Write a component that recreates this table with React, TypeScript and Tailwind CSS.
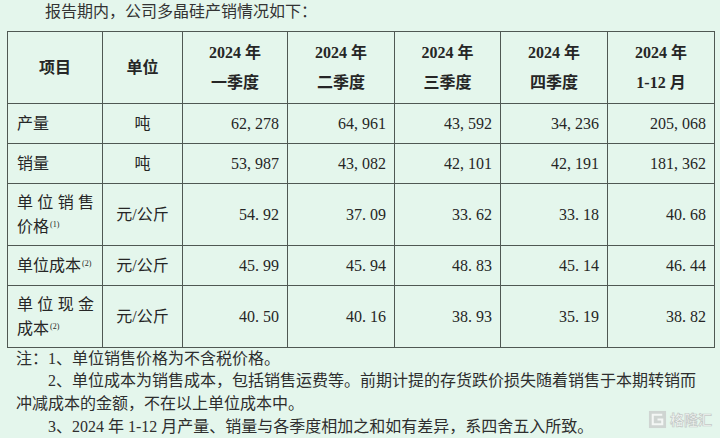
import React from "react"

const cjk = { fontFamily: '"Liberation Serif", "Noto Sans CJK SC", serif' }

type Row = {
   name: React.ReactNode
   unit: string
   values: string[]
   tall?: boolean
}

// SimSun style numbers: a little gap after "," and "."
function Num({ v }: { v: string }) {
   const parts = v.split(/([,.])/)
   return (
      <span>
         {parts.map((p, i) =>
            p === "," || p === "." ? (
               <span key={i} className="mr-[4px]">{p}</span>
            ) : (
               <span key={i}>{p}</span>
            )
         )}
      </span>
   )
}

function Spread({ text }: { text: string }) {
   return (
      <div className="flex justify-between h-[24px]">
         {text.split("").map((c, i) => (
            <span key={i}>{c}</span>
         ))}
      </div>
   )
}

function Sup({ n }: { n: number }) {
   return <sup className="text-[8px] relative -top-[5px] ml-[1px]">({n})</sup>
}

const rows: Row[] = [
   { name: "产量", unit: "吨", values: ["62,278", "64,961", "43,592", "34,236", "205,068"] },
   { name: "销量", unit: "吨", values: ["53,987", "43,082", "42,101", "42,191", "181,362"] },
   {
      name: (
         <div className="leading-[24px]">
            <Spread text="单位销售" />
            <div className="h-[24px]">价格<Sup n={1} /></div>
         </div>
      ),
      unit: "元/公斤",
      values: ["54.92", "37.09", "33.62", "33.18", "40.68"],
      tall: true,
   },
   {
      name: (
         <span>单位成本<Sup n={2} /></span>
      ),
      unit: "元/公斤",
      values: ["45.99", "45.94", "48.83", "45.14", "46.44"],
   },
   {
      name: (
         <div className="leading-[24px]">
            <Spread text="单位现金" />
            <div className="h-[24px]">成本<Sup n={2} /></div>
         </div>
      ),
      unit: "元/公斤",
      values: ["40.50", "40.16", "38.93", "35.19", "38.82"],
      tall: true,
   },
]

const heads = ["一季度", "二季度", "三季度", "四季度", "1-12 月"]

export default function App() {
   const cell = "border border-[#4f5853]"
   return (
      <div className="w-[720px] h-[438px] bg-[#e4f6ec] text-[#262626] text-[16px] relative overflow-hidden" style={cjk}>
         <div className="h-[31px] pl-[45px] leading-[24px] text-[#333]">报告期内，公司多晶硅产销情况如下：</div>

         <table className="ml-[7px] w-[707px] border-collapse table-fixed">
            <colgroup>
               <col className="w-[95px]" />
               <col className="w-[80px]" />
               <col className="w-[105px]" />
               <col className="w-[107px]" />
               <col className="w-[106px]" />
               <col className="w-[107px]" />
               <col className="w-[107px]" />
            </colgroup>
            <thead>
               <tr className="h-[72px] font-bold">
                  <th className={cell}>项目</th>
                  <th className={cell}>单位</th>
                  {heads.map((h) => (
                     <th key={h} className={`${cell} leading-[30px]`}>
                        <div className="h-[30px]">2024 年</div>
                        <div className="h-[30px]">{h}</div>
                     </th>
                  ))}
               </tr>
            </thead>
            <tbody>
               {rows.map((r, i) => (
                  <tr key={i} className={r.tall ? "h-[62px]" : "h-[40px]"}>
                     <td className={`${cell} pl-[9px] pr-[8px]`}>{r.name}</td>
                     <td className={`${cell} text-center`}>{r.unit}</td>
                     {r.values.map((v, j) => (
                        <td key={j} className={`${cell} text-right pr-[8px]`}>
                           <Num v={v} />
                        </td>
                     ))}
                  </tr>
               ))}
            </tbody>
         </table>

         <div className="pl-[16px] leading-[22px] text-[#2e2e2e]">
            <div className="h-[22px]">注：1、单位销售价格为不含税价格。</div>
            <div className="h-[23px] pl-[32px]">2、单位成本为销售成本，包括销售运费等。前期计提的存货跌价损失随着销售于本期转销而</div>
            <div className="h-[23px]">冲减成本的金额，不在以上单位成本中。</div>
            <div className="h-[22px] pl-[32px]">3、2024 年 1-12 月产量、销量与各季度相加之和如有差异，系四舍五入所致。</div>
         </div>

         <div className="absolute left-[648px] top-[410px] flex items-center gap-[3px] whitespace-nowrap text-[#f4f7f5]">
            <svg width="19" height="19" viewBox="0 0 20 20">
               <rect x="1" y="1" width="18" height="18" fill="#cfd5d2" />
               <path d="M15 5H5v10h10v-5h-5" fill="none" stroke="#f4f7f5" strokeWidth="2.2" />
            </svg>
            <span
               className="text-[14px] leading-[19px] font-bold"
               style={{ WebkitTextStroke: "0.7px #c3c9c6", fontFamily: '"Noto Sans CJK SC", sans-serif' }}
            >
               格隆汇
            </span>
         </div>
      </div>
   )
}
